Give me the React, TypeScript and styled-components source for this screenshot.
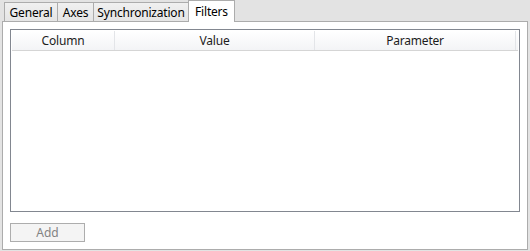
import React from "react";
import styled, { createGlobalStyle } from "styled-components";

const Global = createGlobalStyle`
  html, body { margin: 0; padding: 0; background: #e3e3e3; }
  body { font-family: "Noto Sans", "Open Sans", sans-serif; font-size: 12px; color: #000; }
`;

const Root = styled.div`
  width: 530px;
  height: 251px;
  box-sizing: border-box;
  padding: 0 2px 3px 2px;
  display: flex;
  flex-direction: column;
`;

const TabStrip = styled.div`
  display: flex;
  align-items: flex-end;
  height: 21px;
  padding-left: 2px;
  flex-shrink: 0;
`;

const Tab = styled.div<{ $w: number; $active?: boolean }>`
  box-sizing: border-box;
  width: ${(p) => p.$w}px;
  height: ${(p) => (p.$active ? 22 : 19)}px;
  margin-left: -1px;
  margin-bottom: ${(p) => (p.$active ? -1 : 0)}px;
  border: 1px solid #acacac;
  border-bottom: none;
  background: ${(p) => (p.$active ? "#ffffff" : "linear-gradient(#f0f0f0, #e5e5e5)")};
  display: flex;
  align-items: center;
  justify-content: center;
  padding-top: ${(p) => (p.$active ? 0 : 1)}px;
  font-size: 12px;
  letter-spacing: -0.2px;
  position: relative;
  z-index: ${(p) => (p.$active ? 2 : 1)};
  &:first-child { margin-left: 0; }
`;

const Panel = styled.div`
  flex: 1;
  box-sizing: border-box;
  border: 1px solid #acacac;
  background: #ffffff;
  padding: 7px;
  display: flex;
  flex-direction: column;
  position: relative;
  z-index: 1;
`;

const List = styled.div`
  box-sizing: border-box;
  height: 183px;
  border: 1px solid #828790;
  padding: 1px;
  background: #fff;
`;

const HeaderRow = styled.div`
  display: flex;
  height: 19px;
  box-sizing: content-box;
  border-bottom: 1px solid #d5d5d5;
  background: linear-gradient(#ffffff, #f3f4f6);
`;

const HeaderCell = styled.div<{ $w: number }>`
  box-sizing: border-box;
  width: ${(p) => p.$w}px;
  border-right: 1px solid #e3e5e8;
  display: flex;
  align-items: center;
  justify-content: center;
  color: #1c1c1c;
  font-size: 12px;
  letter-spacing: -0.2px;
`;

const Button = styled.button`
  box-sizing: border-box;
  margin-top: 11px;
  width: 75px;
  height: 19px;
  border: 1px solid #adadad;
  background: #f4f4f4;
  color: #838383;
  font-family: "Noto Sans", "Open Sans", sans-serif;
  font-size: 12px;
  padding: 0;
  display: flex;
  align-items: center;
  justify-content: center;
`;

const tabs = [
  { label: "General", w: 54 },
  { label: "Axes", w: 37 },
  { label: "Synchronization", w: 96 },
  { label: "Filters", w: 47, active: true },
];

const columns = [
  { label: "Column", w: 103 },
  { label: "Value", w: 200 },
  { label: "Parameter", w: 201 },
];

export default function App() {
  return (
    <>
      <Global />
      <Root>
        <TabStrip>
          {tabs.map((t) => (
            <Tab key={t.label} $w={t.w} $active={t.active}>
              {t.label}
            </Tab>
          ))}
        </TabStrip>
        <Panel>
          <List>
            <HeaderRow>
              {columns.map((c) => (
                <HeaderCell key={c.label} $w={c.w}>
                  {c.label}
                </HeaderCell>
              ))}
            </HeaderRow>
          </List>
          <Button disabled>Add</Button>
        </Panel>
      </Root>
    </>
  );
}
